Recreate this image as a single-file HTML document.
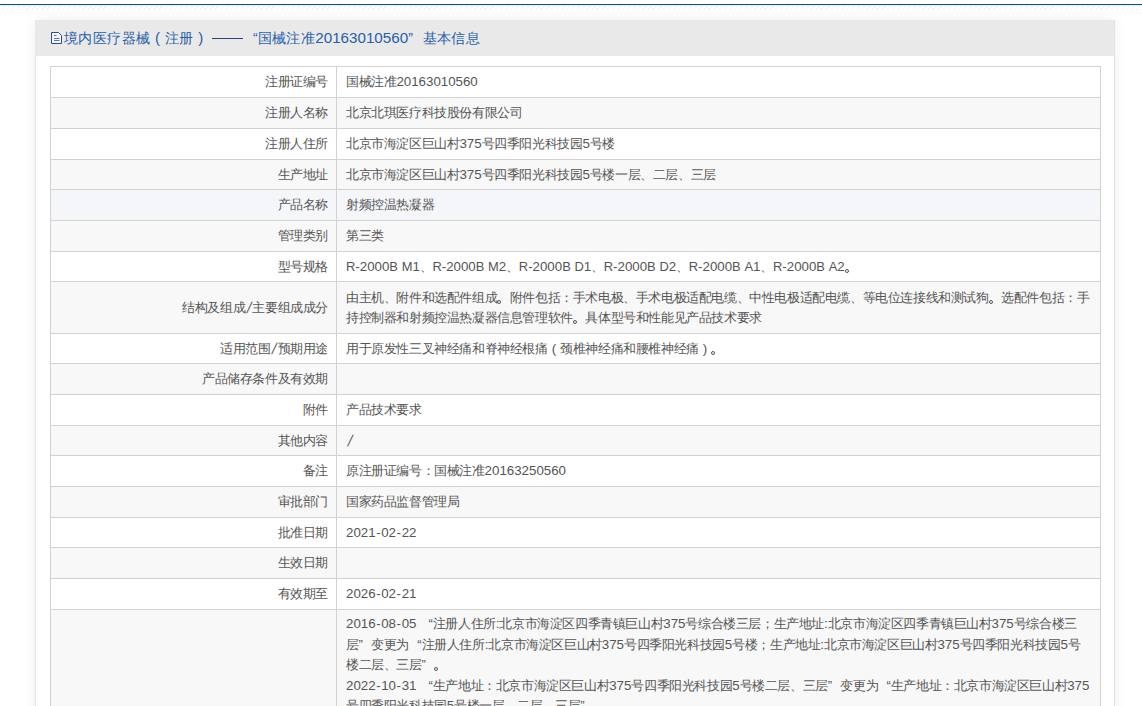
<!DOCTYPE html>
<html><head><meta charset="utf-8">
<style>
html,body{margin:0;padding:0;background:#fff;width:1142px;height:706px;overflow:hidden;position:relative;font-family:"Liberation Sans",sans-serif;}
b,i{font-weight:normal;font-style:normal}
.topline{position:absolute;left:0;top:4px;width:1142px;height:1px;background:#17507f}
.topline2{position:absolute;left:0;top:5px;width:1142px;height:1px;background:#d6f1f8}
.panel{position:absolute;left:35px;top:20px;width:1078px;height:720px;background:#fff;border-left:1px solid #e3e3e3;border-right:1px solid #e3e3e3;box-shadow:0 0 12px rgba(0,0,0,0.07)}
.head{position:absolute;left:35px;top:20px;width:1079px;height:36px;background:#e9e9e9}
.title{position:absolute;left:64px;top:28px;line-height:20px;color:#2a5eab;white-space:nowrap}
.title .c{font-size:14px;letter-spacing:0.4px}
.title .ql,.title .qr{width:14.4px;font-size:14px}
.title .a{font-size:15.2px}
.title .dash{display:inline-block;width:31px;height:1px;background:#22467f;vertical-align:4px;margin-right:0px}
.icon{position:absolute;left:51px;top:31px}
.row{position:absolute;left:50px;width:1050px}
.hl{position:absolute;left:50px;width:1051px;height:1px;background:#d2d2d2}
.vl{position:absolute;top:66px;width:1px;height:700px;background:#d2d2d2}
.t{position:absolute;line-height:20px;color:#555;white-space:nowrap}
.c{font-size:13px;letter-spacing:-0.4px}
.a{font-size:13.3px}
.ql,.qr{display:inline-block;width:12.6px;font-size:13px}
.ql{text-align:right}
.pd{display:inline-block;width:12.6px;height:10px;position:relative}
.pd::after{content:"";position:absolute;left:0px;bottom:-2px;width:4px;height:4px;box-sizing:border-box;border:1px solid #555;border-radius:50%}
.pp{display:inline-block;width:12.6px;text-align:center;font-size:13.5px}
.title .pp{width:14.4px;font-size:15px}
.qr{text-align:left}
.L{font-size:12.9px}
.hy{padding:0 0.6px}
.sl{display:inline-block;font-size:15.5px;padding:0 0.9px 0 2px;vertical-align:-1.5px;color:#666;transform:skewX(-12deg)}
.hatch{position:absolute;left:0;top:6px;width:1142px;height:4px;background:repeating-linear-gradient(-45deg,rgba(170,165,160,0.14) 0 1px,rgba(255,255,255,0) 1px 3.6px)}
.lab{right:814px}
.val{left:346px}
</style></head><body>
<div class="topline"></div><div class="topline2"></div><div class="hatch"></div>
<div class="panel"></div>
<div class="head"></div>
<svg class="icon" width="12" height="14" viewBox="0 0 12 14"><path d="M0.5 1.5H7.5L10.5 4.5V12.5H0.5Z" fill="#f3f5fa" stroke="#2f4f8c" stroke-width="1"/><path d="M3 4.5H5.5M3 7.5H8.5M3 9.5H8.5" stroke="#5a74a8" stroke-width="1"/></svg>
<div class="title"><b class="c">境内医疗器械</b><i class="pp">(</i><b class="c">注册</b><i class="pp">)</i><b class="a"> </b><i class="dash"></i><i class="ql">“</i><b class="c">国械注准</b><b class="a">20163010560</b><i class="qr">”</i><b class="c">基本信息</b></div>
<div class="row" style="top:67px;height:30px;background:#fff"></div>
<div class="hl" style="top:66px"></div>
<div class="t lab" style="top:71.20px"><b class="c">注册证编号</b></div>
<div class="t val" style="top:71.20px"><b class="c">国械注准</b><b class="a">20163010560</b></div>
<div class="row" style="top:98px;height:30px;background:#f8f8f8"></div>
<div class="hl" style="top:97px"></div>
<div class="t lab" style="top:102.20px"><b class="c">注册人名称</b></div>
<div class="t val" style="top:102.20px"><b class="c">北京北琪医疗科技股份有限公司</b></div>
<div class="row" style="top:129px;height:30px;background:#fff"></div>
<div class="hl" style="top:128px"></div>
<div class="t lab" style="top:133.20px"><b class="c">注册人住所</b></div>
<div class="t val" style="top:133.20px"><b class="c">北京市海淀区巨山村</b><b class="a">375</b><b class="c">号四季阳光科技园</b><b class="a">5</b><b class="c">号楼</b></div>
<div class="row" style="top:160px;height:29px;background:#f8f8f8"></div>
<div class="hl" style="top:159px"></div>
<div class="t lab" style="top:163.70px"><b class="c">生产地址</b></div>
<div class="t val" style="top:163.70px"><b class="c">北京市海淀区巨山村</b><b class="a">375</b><b class="c">号四季阳光科技园</b><b class="a">5</b><b class="c">号楼一层、二层、三层</b></div>
<div class="row" style="top:190px;height:30px;background:#f4f6fa"></div>
<div class="hl" style="top:189px"></div>
<div class="t lab" style="top:194.20px"><b class="c">产品名称</b></div>
<div class="t val" style="top:194.20px"><b class="c">射频控温热凝器</b></div>
<div class="row" style="top:221px;height:30px;background:#f8f8f8"></div>
<div class="hl" style="top:220px"></div>
<div class="t lab" style="top:225.20px"><b class="c">管理类别</b></div>
<div class="t val" style="top:225.20px"><b class="c">第三类</b></div>
<div class="row" style="top:252px;height:29px;background:#fff"></div>
<div class="hl" style="top:251px"></div>
<div class="t lab" style="top:255.70px"><b class="c">型号规格</b></div>
<div class="t val" style="top:255.70px"><b class="a"><i class="L">R</i>-2000<i class="L">B</i> <i class="L">M</i>1</b><b class="c">、</b><b class="a"><i class="L">R</i>-2000<i class="L">B</i> <i class="L">M</i>2</b><b class="c">、</b><b class="a"><i class="L">R</i>-2000<i class="L">B</i> <i class="L">D</i>1</b><b class="c">、</b><b class="a"><i class="L">R</i>-2000<i class="L">B</i> <i class="L">D</i>2</b><b class="c">、</b><b class="a"><i class="L">R</i>-2000<i class="L">B</i> <i class="L">A</i>1</b><b class="c">、</b><b class="a"><i class="L">R</i>-2000<i class="L">B</i> <i class="L">A</i>2</b><i class="pd"></i></div>
<div class="row" style="top:282px;height:51px;background:#f8f8f8"></div>
<div class="hl" style="top:281px"></div>
<div class="t lab" style="top:296.70px"><b class="c">结构及组成</b><b class="a"><i class="sl">/</i></b><b class="c">主要组成成分</b></div>
<div class="t val" style="top:286.70px"><b class="c">由主机、附件和选配件组成</b><i class="pd"></i><b class="c">附件包括：手术电极、手术电极适配电缆、中性电极适配电缆、等电位连接线和测试狗</b><i class="pd"></i><b class="c">选配件包括：手</b></div>
<div class="t val" style="top:306.70px"><b class="c">持控制器和射频控温热凝器信息管理软件</b><i class="pd"></i><b class="c">具体型号和性能见产品技术要求</b></div>
<div class="row" style="top:334px;height:29px;background:#fff"></div>
<div class="hl" style="top:333px"></div>
<div class="t lab" style="top:337.70px"><b class="c">适用范围</b><b class="a"><i class="sl">/</i></b><b class="c">预期用途</b></div>
<div class="t val" style="top:337.70px"><b class="c">用于原发性三叉神经痛和脊神经根痛</b><i class="pp">(</i><b class="c">颈椎神经痛和腰椎神经痛</b><i class="pp">)</i><i class="pd"></i></div>
<div class="row" style="top:364px;height:30px;background:#f8f8f8"></div>
<div class="hl" style="top:363px"></div>
<div class="t lab" style="top:368.20px"><b class="c">产品储存条件及有效期</b></div>
<div class="row" style="top:395px;height:30px;background:#fff"></div>
<div class="hl" style="top:394px"></div>
<div class="t lab" style="top:399.20px"><b class="c">附件</b></div>
<div class="t val" style="top:399.20px"><b class="c">产品技术要求</b></div>
<div class="row" style="top:426px;height:29px;background:#f8f8f8"></div>
<div class="hl" style="top:425px"></div>
<div class="t lab" style="top:429.70px"><b class="c">其他内容</b></div>
<div class="t val" style="top:429.70px"><b class="a"><i class="sl">/</i></b></div>
<div class="row" style="top:456px;height:30px;background:#fff"></div>
<div class="hl" style="top:455px"></div>
<div class="t lab" style="top:460.20px"><b class="c">备注</b></div>
<div class="t val" style="top:460.20px"><b class="c">原注册证编号：国械注准</b><b class="a">20163250560</b></div>
<div class="row" style="top:487px;height:30px;background:#f8f8f8"></div>
<div class="hl" style="top:486px"></div>
<div class="t lab" style="top:491.20px"><b class="c">审批部门</b></div>
<div class="t val" style="top:491.20px"><b class="c">国家药品监督管理局</b></div>
<div class="row" style="top:518px;height:29px;background:#fff"></div>
<div class="hl" style="top:517px"></div>
<div class="t lab" style="top:521.70px"><b class="c">批准日期</b></div>
<div class="t val" style="top:521.70px"><b class="a">2021<i class="hy">-</i>02<i class="hy">-</i>22</b></div>
<div class="row" style="top:548px;height:30px;background:#f8f8f8"></div>
<div class="hl" style="top:547px"></div>
<div class="t lab" style="top:552.20px"><b class="c">生效日期</b></div>
<div class="row" style="top:579px;height:30px;background:#fff"></div>
<div class="hl" style="top:578px"></div>
<div class="t lab" style="top:583.20px"><b class="c">有效期至</b></div>
<div class="t val" style="top:583.20px"><b class="a">2026<i class="hy">-</i>02<i class="hy">-</i>21</b></div>
<div class="row" style="top:610px;height:150px;background:#f8f8f8"></div>
<div class="hl" style="top:609px"></div>
<div class="t val" style="top:613.00px"><b class="a">2016<i class="hy">-</i>08<i class="hy">-</i>05 </b><i class="ql">“</i><b class="c">注册人住所</b><b class="a">:</b><b class="c">北京市海淀区四季青镇巨山村</b><b class="a">375</b><b class="c">号综合楼三层；生产地址</b><b class="a">:</b><b class="c">北京市海淀区四季青镇巨山村</b><b class="a">375</b><b class="c">号综合楼三</b></div>
<div class="t val" style="top:633.50px"><b class="c">层</b><i class="qr">”</i><b class="c">变更为</b><i class="ql">“</i><b class="c">注册人住所</b><b class="a">:</b><b class="c">北京市海淀区巨山村</b><b class="a">375</b><b class="c">号四季阳光科技园</b><b class="a">5</b><b class="c">号楼；生产地址</b><b class="a">:</b><b class="c">北京市海淀区巨山村</b><b class="a">375</b><b class="c">号四季阳光科技园</b><b class="a">5</b><b class="c">号</b></div>
<div class="t val" style="top:654.00px"><b class="c">楼二层、三层</b><i class="qr">”</i><i class="pd"></i></div>
<div class="t val" style="top:674.50px"><b class="a">2022<i class="hy">-</i>10<i class="hy">-</i>31 </b><i class="ql">“</i><b class="c">生产地址：北京市海淀区巨山村</b><b class="a">375</b><b class="c">号四季阳光科技园</b><b class="a">5</b><b class="c">号楼二层、三层</b><i class="qr">”</i><b class="c">变更为</b><i class="ql">“</i><b class="c">生产地址：北京市海淀区巨山村</b><b class="a">375</b></div>
<div class="t val" style="top:695.00px"><b class="c">号四季阳光科技园</b><b class="a">5</b><b class="c">号楼一层、二层、三层</b><i class="qr">”</i></div>
<div class="vl" style="left:50px"></div>
<div class="vl" style="left:336px"></div>
<div class="vl" style="left:1100px"></div>
</body></html>
